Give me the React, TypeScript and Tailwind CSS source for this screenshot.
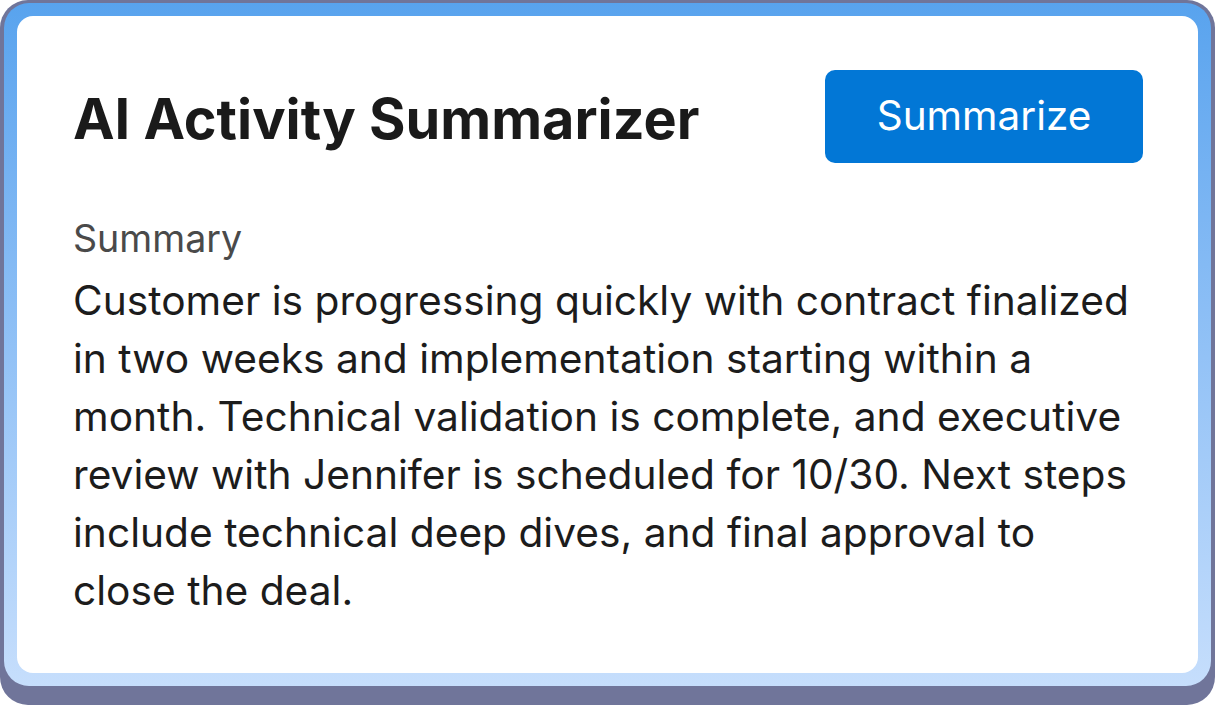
export default function App() {
  return (
    <div className="w-[1215px] h-[705px] bg-white" style={{ fontFamily: "Inter, 'Noto Sans', sans-serif" }}>
      <div className="w-full h-full rounded-[28px] bg-[#70759a] pt-[3px] px-[4px] pb-[19px] flex">
        <div className="flex-1 rounded-[25px] bg-gradient-to-b from-[#58a3ee] to-[#c6defc] p-[13px] flex">
          <div className="flex-1 rounded-[16px] bg-white pt-[54px] pl-[56px] pr-[55px] flex flex-col">
            <div className="flex items-center justify-between">
              <h1 className="pt-[4px] text-[55.75px] leading-[64px] font-bold text-[#1a1a1a]">AI Activity Summarizer</h1>
              <button className="w-[318px] h-[93px] rounded-[10px] bg-[#0277d6] text-white text-[40.5px] leading-none">Summarize</button>
            </div>
            <div className="mt-[53px] text-[37.6px] leading-[46px] text-[#4a4a4a]">Summary</div>
            <p className="mt-[10px] text-[40.7px] leading-[58px] text-[#1c1c1c]">
              Customer is progressing quickly with contract finalized in two weeks and implementation starting within a month. Technical validation is complete, and executive review with Jennifer is scheduled for 10/30. Next steps include technical deep dives, and final approval to close the deal.
            </p>
          </div>
        </div>
      </div>
    </div>
  );
}
